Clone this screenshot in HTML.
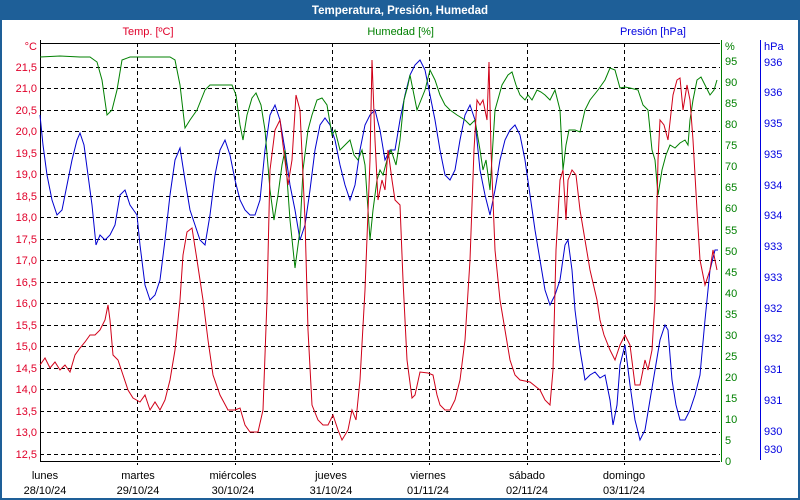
<!DOCTYPE html>
<html><head><meta charset="utf-8"><style>
html,body{margin:0;padding:0;background:#fff}
svg{display:block;font-family:"Liberation Sans",sans-serif;font-size:11px}
</style></head><body>
<svg width="800" height="500" viewBox="0 0 800 500" xmlns="http://www.w3.org/2000/svg">
<rect x="0" y="0" width="800" height="500" fill="#1e5f98"/>
<rect x="2" y="20" width="796" height="478" fill="#fff"/>
<text x="400" y="14" fill="#fff" font-weight="bold" text-anchor="middle" font-size="11.5">Temperatura, Presión, Humedad</text>
<g stroke="#000" stroke-dasharray="4,3" stroke-width="1">
<line x1="40" x2="720" y1="67.5" y2="67.5"/><line x1="40" x2="720" y1="88.5" y2="88.5"/><line x1="40" x2="720" y1="110.5" y2="110.5"/><line x1="40" x2="720" y1="131.5" y2="131.5"/><line x1="40" x2="720" y1="153.5" y2="153.5"/><line x1="40" x2="720" y1="174.5" y2="174.5"/><line x1="40" x2="720" y1="196.5" y2="196.5"/><line x1="40" x2="720" y1="217.5" y2="217.5"/><line x1="40" x2="720" y1="239.5" y2="239.5"/><line x1="40" x2="720" y1="260.5" y2="260.5"/><line x1="40" x2="720" y1="282.5" y2="282.5"/><line x1="40" x2="720" y1="303.5" y2="303.5"/><line x1="40" x2="720" y1="325.5" y2="325.5"/><line x1="40" x2="720" y1="346.5" y2="346.5"/><line x1="40" x2="720" y1="368.5" y2="368.5"/><line x1="40" x2="720" y1="389.5" y2="389.5"/><line x1="40" x2="720" y1="411.5" y2="411.5"/><line x1="40" x2="720" y1="432.5" y2="432.5"/><line x1="40" x2="720" y1="454.5" y2="454.5"/>
<line x1="137.5" x2="137.5" y1="43" y2="465"/><line x1="235.5" x2="235.5" y1="43" y2="465"/><line x1="332.5" x2="332.5" y1="43" y2="465"/><line x1="429.5" x2="429.5" y1="43" y2="465"/><line x1="527.5" x2="527.5" y1="43" y2="465"/><line x1="624.5" x2="624.5" y1="43" y2="465"/>
</g>
<line x1="40" x2="720" y1="43.5" y2="43.5" stroke="#000"/>
<line x1="40" x2="720" y1="461.5" y2="461.5" stroke="#000"/>
<line x1="40.5" x2="40.5" y1="40" y2="462" stroke="#000"/>
<line x1="721.5" x2="721.5" y1="40" y2="462" stroke="#008000"/>
<line x1="760.5" x2="760.5" y1="40" y2="460" stroke="#0000e0"/>
<g fill="#e0002a" text-anchor="end">
<text x="37" y="50">°C</text><text x="37" y="71">21,5</text><text x="37" y="92">21,0</text><text x="37" y="114">20,5</text><text x="37" y="135">20,0</text><text x="37" y="157">19,5</text><text x="37" y="178">19,0</text><text x="37" y="200">18,5</text><text x="37" y="221">18,0</text><text x="37" y="243">17,5</text><text x="37" y="264">17,0</text><text x="37" y="286">16,5</text><text x="37" y="307">16,0</text><text x="37" y="329">15,5</text><text x="37" y="350">15,0</text><text x="37" y="372">14,5</text><text x="37" y="393">14,0</text><text x="37" y="415">13,5</text><text x="37" y="436">13,0</text><text x="37" y="458">12,5</text>
</g>
<g fill="#008000">
<text x="725" y="50">%</text><text x="725" y="65">95</text><text x="725" y="86">90</text><text x="725" y="107">85</text><text x="725" y="128">80</text><text x="725" y="149">75</text><text x="725" y="170">70</text><text x="725" y="191">65</text><text x="725" y="212">60</text><text x="725" y="234">55</text><text x="725" y="255">50</text><text x="725" y="276">45</text><text x="725" y="297">40</text><text x="725" y="318">35</text><text x="725" y="339">30</text><text x="725" y="360">25</text><text x="725" y="381">20</text><text x="725" y="402">15</text><text x="725" y="423">10</text><text x="725" y="444">5</text><text x="725" y="465">0</text>
</g>
<g fill="#0000e0">
<text x="764" y="50">hPa</text><text x="764" y="66">936</text><text x="764" y="96">936</text><text x="764" y="127">935</text><text x="764" y="158">935</text><text x="764" y="189">934</text><text x="764" y="219">934</text><text x="764" y="250">933</text><text x="764" y="281">933</text><text x="764" y="312">932</text><text x="764" y="342">932</text><text x="764" y="373">931</text><text x="764" y="404">931</text><text x="764" y="435">930</text><text x="764" y="453">930</text>
</g>
<text x="148" y="35" fill="#e0002a" text-anchor="middle">Temp. [ºC]</text>
<text x="434" y="35" fill="#008000" text-anchor="end">Humedad [%]</text>
<text x="686" y="35" fill="#0000e0" text-anchor="end">Presión [hPa]</text>
<g fill="#000" text-anchor="middle">
<text x="45" y="479">lunes</text><text x="45" y="494">28/10/24</text>
<text x="138" y="479">martes</text><text x="138" y="494">29/10/24</text>
<text x="233" y="479">miércoles</text><text x="233" y="494">30/10/24</text>
<text x="331" y="479">jueves</text><text x="331" y="494">31/10/24</text>
<text x="428" y="479">viernes</text><text x="428" y="494">01/11/24</text>
<text x="527" y="479">sábado</text><text x="527" y="494">02/11/24</text>
<text x="624" y="479">domingo</text><text x="624" y="494">03/11/24</text>
</g>
<polyline fill="none" stroke="#0000d0" stroke-width="1" points="40,115 43,145 47,175 52,200 57,215 62,210 67,185 72,160 77,140 80,133 84,145 88,175 92,205 96,245 100,235 105,240 110,235 115,225 120,195 125,190 130,205 137,215 140,245 145,285 150,300 155,295 160,280 165,240 170,195 175,160 180,148 185,180 190,210 195,225 200,240 205,245 210,215 215,175 220,150 225,140 230,155 235,180 240,200 245,210 250,215 255,215 260,200 265,150 270,115 275,105 280,120 285,150 290,185 295,210 300,240 305,225 310,190 315,150 320,125 325,118 330,125 335,140 340,165 345,185 350,200 355,185 360,150 365,125 370,115 375,110 380,130 385,160 390,150 395,150 400,120 405,95 410,75 415,65 420,60 425,70 430,95 435,120 440,150 445,175 450,180 455,170 460,140 465,115 470,105 475,120 480,170 485,195 490,215 495,190 500,160 505,140 510,130 515,125 520,135 525,160 530,195 535,230 540,260 545,290 550,305 555,295 560,280 565,245 568,240 572,270 575,310 580,350 585,380 590,375 595,372 600,378 605,375 610,400 613,425 617,405 620,365 625,345 630,385 635,420 640,440 645,430 650,400 655,370 660,340 665,325 668,330 672,380 676,405 680,420 685,420 690,410 695,395 700,375 705,320 710,270 715,250 718,250"/>
<polyline fill="none" stroke="#008000" stroke-width="1" points="40,57 60,56 80,57 90,57 97,62 102,80 107,115 112,110 117,90 122,60 130,57 150,57 170,57 175,60 180,85 185,128 190,120 197,110 205,90 210,85 220,85 232,85 236,95 240,125 243,140 247,115 252,98 256,93 261,105 265,130 270,190 274,220 278,195 282,165 285,150 290,220 295,268 300,230 303,170 308,130 312,115 317,100 322,98 327,105 332,135 335,130 340,150 345,145 350,140 354,155 358,160 362,150 365,165 370,240 373,210 377,180 380,170 383,175 387,160 391,150 396,165 400,140 404,100 408,85 410,75 413,90 417,110 421,100 425,90 430,70 435,80 440,95 445,105 450,110 457,115 465,120 470,125 475,120 480,150 483,170 486,160 490,190 495,110 502,85 508,75 512,72 516,85 520,95 525,100 528,95 532,100 537,90 541,92 545,95 550,100 555,90 560,110 563,170 566,145 569,130 575,130 580,132 585,110 590,100 598,90 605,80 610,68 615,70 620,88 625,87 630,88 638,90 643,105 648,110 652,150 655,160 658,195 662,170 666,155 670,145 675,148 680,143 685,140 688,145 690,120 693,100 697,80 701,77 705,85 710,95 714,90 717,80"/>
<polyline fill="none" stroke="#d00018" stroke-width="1" points="40,365 45,358 50,368 55,362 60,370 65,365 70,372 75,355 80,348 85,342 90,335 95,335 100,330 105,320 108,305 110,320 113,355 118,360 123,375 128,390 133,398 140,402 145,395 150,410 155,402 160,410 165,400 170,380 175,350 180,300 183,255 187,232 192,228 197,260 203,300 208,340 213,375 220,395 228,410 235,410 240,408 245,425 250,432 258,432 263,410 267,300 270,170 275,130 280,120 283,145 288,185 292,160 296,95 300,110 305,220 308,330 312,405 318,420 323,425 328,425 333,415 338,430 342,440 348,430 352,410 356,420 360,380 365,290 370,160 372,60 375,140 378,200 382,180 385,190 388,150 392,180 395,200 400,205 403,280 407,360 412,398 415,395 420,372 428,373 433,375 437,395 440,405 445,410 450,410 455,400 460,380 465,340 470,260 474,150 477,100 480,105 483,100 487,120 489,62 491,150 495,250 500,300 505,330 510,360 515,375 520,380 530,382 540,390 545,400 550,405 553,370 556,250 560,180 563,170 566,220 568,180 572,170 576,175 580,210 585,240 590,270 597,300 600,320 604,335 610,350 615,360 620,345 625,335 630,345 635,385 640,385 645,360 648,370 652,350 655,300 658,160 660,120 664,125 668,140 673,95 677,80 680,78 683,110 687,85 690,100 693,140 697,210 700,260 705,285 710,270 713,250 717,270"/>
</svg>
</body></html>
